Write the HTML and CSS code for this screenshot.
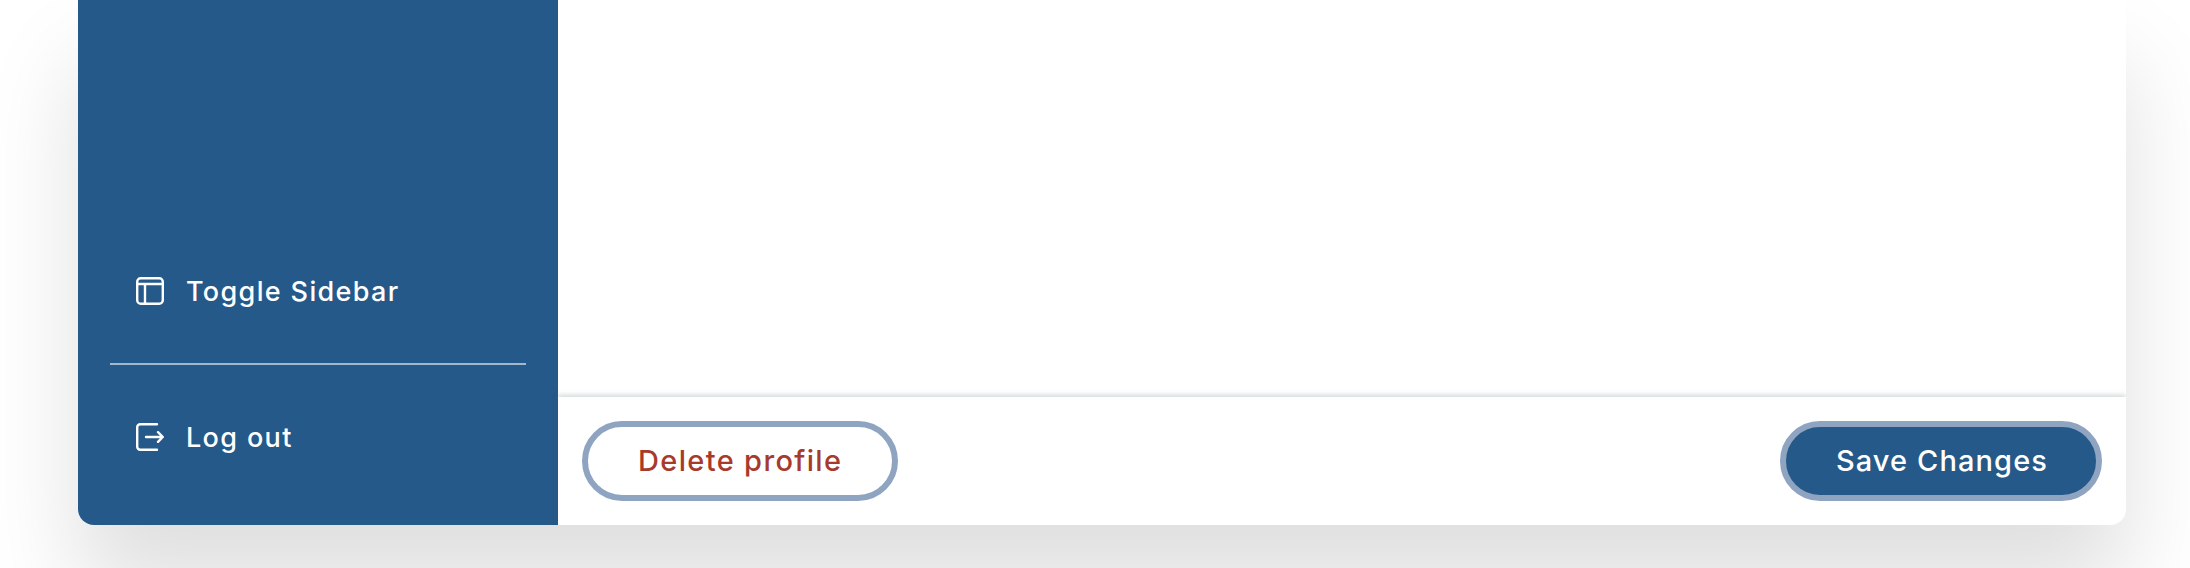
FILE: index.html
```html
<!DOCTYPE html>
<html lang="en">
<head>
  <meta charset="UTF-8">
  <title>Profile Settings</title>
  <link rel="stylesheet" href="styles.css">
</head>
<body>
  <div class="settings-card">
    <aside class="sidebar">
      <a class="sidebar-link toggle-link" href="#">
        <svg class="sidebar-icon" viewBox="0 0 28 28" fill="none" stroke="currentColor" stroke-width="2.4">
          <rect x="1.2" y="1.2" width="25.6" height="25.6" rx="3.5"/>
          <path d="M1 7h26M9 7v20"/>
        </svg>
        <span>Toggle Sidebar</span>
      </a>
      <div class="sidebar-divider"></div>
      <a class="sidebar-link logout-link" href="#">
        <svg class="sidebar-icon" viewBox="0 0 28 28" fill="none" stroke="currentColor" stroke-width="2.4" stroke-linecap="round" stroke-linejoin="round">
          <path d="M21 1.2H4.2a3 3 0 0 0-3 3v19.6a3 3 0 0 0 3 3H21"/>
          <path d="M10 14h16.6M22 9.2l4.8 4.8-4.8 4.8"/>
        </svg>
        <span>Log out</span>
      </a>
    </aside>
    <main class="content">
      <div class="content-body"></div>
      <div class="content-footer">
        <button class="btn btn-delete" type="button">Delete profile</button>
        <button class="btn btn-save" type="button">Save Changes</button>
      </div>
    </main>
  </div>
</body>
</html>
```

FILE: styles.css
```css
html, body {
  margin: 0;
  padding: 0;
  width: 100%;
  height: 100%;
  overflow: hidden;
  background-color: #fff;
}

body {
  font-family: Inter, "Open Sans", sans-serif;
  padding: 0 64px 0 78px;
  box-sizing: border-box;
}

.settings-card {
  display: flex;
  height: 525px;
  background-color: #fff;
  border-radius: 0 0 16px 16px;
  box-shadow: 0 64px 96px rgba(0, 0, 0, 0.13);
  overflow: hidden;
}

.sidebar {
  width: 480px;
  flex-shrink: 0;
  display: flex;
  flex-direction: column;
  justify-content: flex-end;
  padding: 0 32px 16px;
  box-sizing: border-box;
  background-color: #245989;
  color: #fff;
}

.sidebar-link {
  display: flex;
  align-items: center;
  gap: 22px;
  height: 144px;
  padding-left: 26px;
  color: #fff;
  font-size: 27px;
  font-weight: 500;
  letter-spacing: 1.35px;
  text-decoration: none;
}

.sidebar-icon {
  width: 28px;
  height: 28px;
  flex-shrink: 0;
}

.sidebar-divider {
  height: 2px;
  background-color: #a3b7cd;
}

.content {
  flex: 1;
  display: flex;
  flex-direction: column;
}

.content-body {
  flex: 1;
}

.content-footer {
  display: flex;
  justify-content: space-between;
  align-items: center;
  height: 128px;
  padding: 0 24px;
  box-sizing: border-box;
  box-shadow: 0 -2px 5px rgba(70, 100, 100, 0.25);
  background-color: #fff;
}

.btn {
  height: 80px;
  padding: 0 50px 2px;
  border: 6px solid #8fa4c0;
  border-radius: 40px;
  font-family: inherit;
  font-size: 29px;
  font-weight: 500;
  letter-spacing: 1.35px;
  cursor: pointer;
}

.btn-delete {
  background-color: #fff;
  color: #a83a2c;
}

.btn-save {
  padding-right: 48px;
  background-color: #245989;
  color: #fff;
  letter-spacing: 1.1px;
}
```
